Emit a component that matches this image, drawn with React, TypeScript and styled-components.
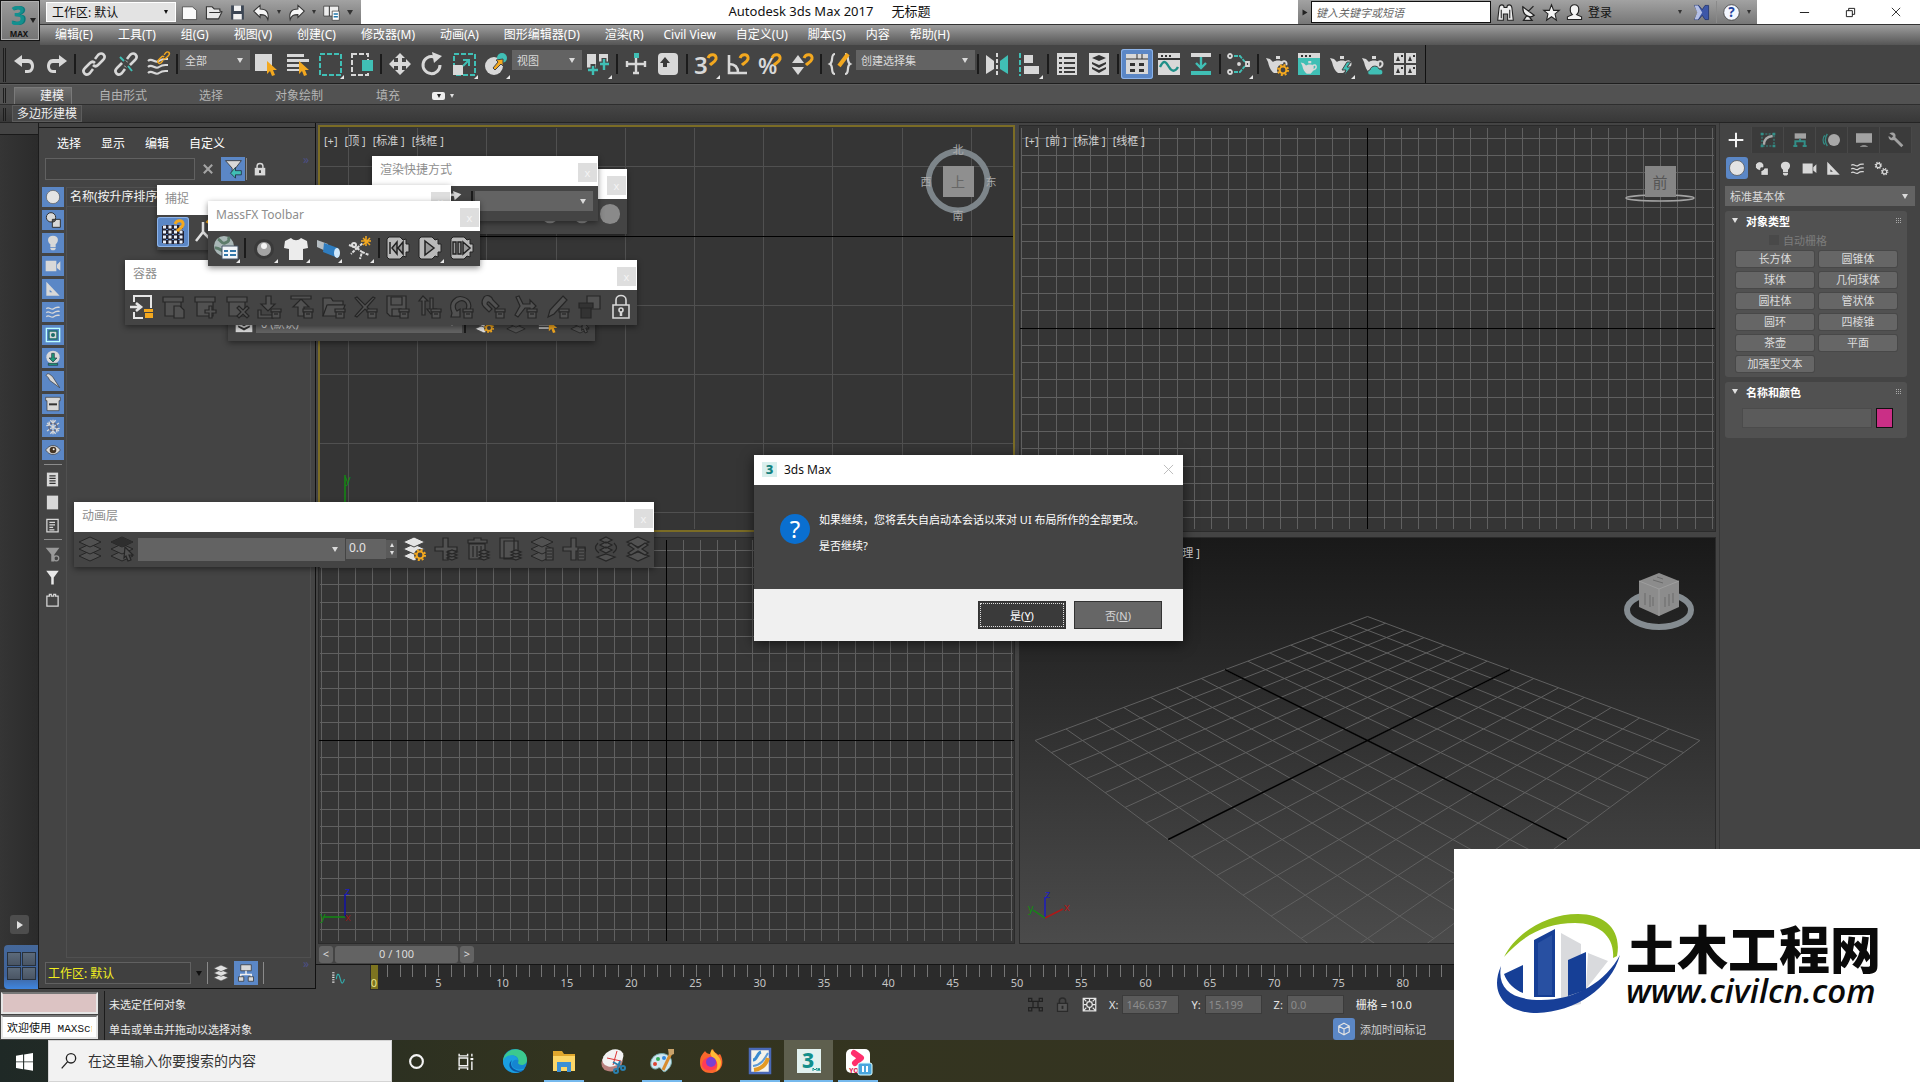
import React from "react";
import styled, { createGlobalStyle, css } from "styled-components";

const C = {
  panel: "#444444",
  view: "#353535",
  light: "#d8d8d8",
  teal: "#40bfb5",
  amber: "#f3a81f",
  blue: "#5b87c6",
  line: "#222222",
  dim: "#515151",
  dimLine: "#262626",
};

const Global = createGlobalStyle`
  *, *::before, *::after { box-sizing: border-box; }
  html, body { margin: 0; padding: 0; background: ${C.panel}; }
  body, button, input, select {
    font-family: "Noto Sans", "Noto Sans CJK SC", sans-serif;
    font-size: 12px;
    color: #e4e4e4;
  }
  button { margin: 0; padding: 0; border: 0; background: none; cursor: default; }
  svg { display: block; flex: none; overflow: visible; }
`;

/* ---------- icons ---------- */

const L = C.light;
const T = C.teal;
const A = C.amber;
const D = { fill: C.dim, stroke: C.dimLine, strokeWidth: 1.2 };

const miniBox = (
  <g>
    <path d="M14 14h10v3H14z" />
    <path d="M15 17h8v6h-8z" />
    <path d="M17 19h4" />
  </g>
);
const miniStack = (
  <g>
    <path d="M18 19l5-2 -5-2 -5 2z" transform="translate(0 4)" />
    <path d="M18 19l5-2 -5-2 -5 2z" transform="translate(0 1)" />
    <path d="M18 19l5-2 -5-2 -5 2z" transform="translate(0 -2)" />
  </g>
);
const miniList = (
  <g>
    <path d="M16 11h7v12h-7z" />
    <path d="M17 14h5M17 17h5M17 20h5" />
  </g>
);
const cursor = <path d="M13 9l10 9h-4l2 5-3 1-2-5-3 3z" fill={A} />;
const hook = <path d="M14 6c2-5 9-4 8 1-1 3-4 4-6 6" fill="none" stroke={A} strokeWidth="3" />;
const teapot = (
  <g>
    <path d="M1 6l4 1 3 3c2-2 8-2 10 0 1 5-1 9-4 11H9c-3-2-5-6-6-11z" fill={L} />
    <path d="M11 4h4v3h-4z" fill={L} />
    <path d="M17 10c5-3 7 4 0 6" fill="none" stroke={L} strokeWidth="2" />
  </g>
);
const layerStack = (fill: string, stroke: string) => (
  <g fill={fill} stroke={stroke}>
    <path d="M12 14l11 5-11 5-11-5z" />
    <path d="M12 7l11 5-11 5-11-5z" />
    <path d="M12 0l11 5-11 5-11-5z" />
  </g>
);
const gear = (x: number, y: number, color: string) => (
  <g transform={`translate(${x} ${y})`} fill="none" stroke={color}>
    <circle r="3.4" strokeWidth="2" />
    <circle r="5" strokeWidth="2" strokeDasharray="2 1.93" />
  </g>
);
const waves = (stroke: string) => (
  <g fill="none" stroke={stroke} strokeWidth="2">
    <path d="M2 7c4-4 7 3 11 0s6-2 9-2" />
    <path d="M2 13c4-4 7 3 11 0s6-2 9-2" />
    <path d="M2 19c4-4 7 3 11 0s6-2 9-2" />
  </g>
);
const chain = (a: string, b: string) => (
  <g fill="none" strokeWidth="2.6">
    <path d="M13 7l3-4c4-4 9 1 5 5l-5 5c-2 2-4 1-5 0" stroke={a} />
    <path d="M11 17l-3 4c-4 4-9-1-5-5l5-5c2-2 4-1 5 0" stroke={b} />
  </g>
);
const mfxGear = (inner: React.ReactNode) => (
  <g>
    <path d="M3 1h11l3 3 3-1v5h3v8h-3v5l-3-1-3 3H3l-2-2V3z" fill="#b9b9b9" stroke="#222" />
    {inner}
  </g>
);

const ICONS: Record<string, React.ReactNode> = {
  undo: <path d="M2 9l8-6v4h6c8 0 8 14 0 14h-3v-3h3c4 0 4-7 0-7h-6v4z" fill={L} />,
  redo: <path d="M23 9l-8-6v4H9C1 7 1 21 9 21h3v-3H9c-4 0-4-7 0-7h6v4z" fill={L} />,
  link: chain(L, L),
  unlink: (
    <g>
      {chain(L, L)}
      <path d="M5 5l14 14" stroke={C.panel} strokeWidth="4" />
      <path d="M6 5l4 4M14 14l4 5" stroke={T} strokeWidth="2" />
    </g>
  ),
  bind: (
    <g>
      <g transform="translate(0 2)">{waves(L)}</g>
      <g transform="translate(11 -1) scale(.55)">{chain(A, A)}</g>
    </g>
  ),
  select: (
    <g>
      <path d="M1 2h17v17H1z" fill={L} />
      {cursor}
    </g>
  ),
  byName: (
    <g>
      <path d="M1 2h17v3H1zM1 7h22v3H1zM1 12h12v3H1zM1 17h12v2H1z" fill={L} />
      {cursor}
    </g>
  ),
  region: <path d="M2 2h21v21H2z" fill="none" stroke={T} strokeWidth="2" strokeDasharray="5 2" />,
  crossing: (
    <g>
      <path d="M2 2h16v21H2z" fill="none" stroke={L} strokeWidth="2" strokeDasharray="5 2" />
      <path d="M12 8h11v11H12z" fill={T} />
    </g>
  ),
  move: <path d="M12 1l5 5h-3v4h4V7l5 5-5 5v-3h-4v4h3l-5 5-5-5h3v-4H6v3l-5-5 5-5v3h4V6H7z" fill={L} />,
  rotate: (
    <g>
      <path d="M14 5a8.500 8.500 0 1 0 6 8" fill="none" stroke={L} strokeWidth="3" />
      <path d="M12 0l10 4-8 7z" fill={L} />
    </g>
  ),
  scale: (
    <g>
      <path d="M2 2h21v21H2z" fill="none" stroke={T} strokeWidth="2" strokeDasharray="5 2" />
      <path d="M1 13h10v10H1z" fill={L} />
      <path d="M11 8h6v6M17 8l-6 6" fill="none" stroke={T} strokeWidth="2" />
    </g>
  ),
  place: (
    <g>
      <circle cx="10" cy="14" r="9" fill={L} />
      <circle cx="18" cy="6" r="5" fill={T} />
      <path d="M9 16l5-6-2-2 7-1v7l-2-2-6 6z" fill={A} stroke="#444" />
    </g>
  ),
  pivot: (
    <g>
      <path d="M1 2h9v16H1zM13 2h9v9h-9z" fill={L} />
      <path d="M7 12v12M1 18h12M18 6v12M12 12h12" stroke={C.panel} strokeWidth="5" />
      <path d="M7 14v9M2 18h10M18 7v11M14 12h9" stroke={T} strokeWidth="2.4" />
    </g>
  ),
  manip: (
    <g>
      <path d="M12 6v16M2 12h20M3 9v6M21 9v6M9 21h6" stroke={L} strokeWidth="2.4" />
      <path d="M10 1h5v5h-5z" fill={T} />
    </g>
  ),
  keyb: (
    <g>
      <rect x="2" y="1" width="20" height="22" rx="4" fill={L} />
      <path d="M9 5l5 6h-3v4H7v-4H4z" fill="#3a3a3a" />
    </g>
  ),
  snap3: (
    <g>
      <text x="0" y="22" fill={L} fontSize="24" fontWeight="600">3</text>
      {hook}
    </g>
  ),
  snapA: (
    <g>
      <path d="M3 3v18h18M3 12c6 0 9 3 9 9" fill="none" stroke={L} strokeWidth="2.6" />
      {hook}
    </g>
  ),
  snapP: (
    <g>
      <text x="0" y="22" fill={L} fontSize="22" fontWeight="600">%</text>
      {hook}
    </g>
  ),
  snapS: (
    <g>
      <path d="M8 3l6 8H2zM8 23l6-8H2z" fill={L} />
      {hook}
    </g>
  ),
  sets: (
    <g fill="none">
      <path d="M7 2c-5 0-1 8-5 10 4 2 0 10 5 10M17 2c5 0 1 8 5 10-4 2 0 10-5 10" stroke={L} strokeWidth="2.2" />
      <path d="M11 14l9-12" stroke={A} strokeWidth="4" />
    </g>
  ),
  mirror: (
    <g>
      <path d="M1 3l8 6v8l-8 5z" fill={L} />
      <path d="M23 3l-8 6v8l8 5z" fill={T} />
      <path d="M12 1v22" stroke={L} strokeWidth="2" strokeDasharray="4 2" />
    </g>
  ),
  align: (
    <g>
      <path d="M3 1v23" stroke={T} strokeWidth="2" strokeDasharray="5 2" />
      <path d="M7 3h9v8H7zM7 14h15v8H7z" fill={L} />
    </g>
  ),
  scene: (
    <g>
      <path d="M2 1h20v22H2z" fill={L} />
      <path d="M4 5h3v2H4zM9 5h11v2H9zM4 10h3v2H4zM9 10h11v2H9zM4 15h3v2H4zM9 15h11v2H9zM4 19h3v2H4zM9 19h11v2H9z" fill="#3a3a3a" />
    </g>
  ),
  layers: (
    <g>
      <path d="M2 1h20v22H2z" fill={L} />
      <path d="M12 3l7 3-7 3-7-3zM5 10l7 3 7-3v2l-7 4-7-4zM5 15l7 3 7-3v2l-7 4-7-4z" fill="#333" />
    </g>
  ),
  ribbon: (
    <g>
      <path d="M1 2h22v20H1z" fill={L} />
      <path d="M1 7h22M12 2v5M17 2v5" stroke="#333" />
      <path d="M5 11h5v3H5zM14 11h5v3h-5zM5 17h5v3H5zM14 17h5v3h-5z" fill="#333" />
    </g>
  ),
  curve: (
    <g>
      <path d="M1 1h22v22H1z" fill={L} />
      <path d="M1 7h22M4 4h2M8 4h2M12 4h2" stroke="#333" strokeWidth="2" />
      <path d="M3 15c4-8 6-5 9 0s6 5 9 0" fill="none" stroke="#1f8f88" strokeWidth="2.4" />
    </g>
  ),
  dope: (
    <g>
      <path d="M2 1h20v4H2z" fill={L} />
      <path d="M12 5v10M7 11l5 5 5-5" fill="none" stroke={T} strokeWidth="2.400" />
      <path d="M2 19h20v4H2z" fill={T} />
    </g>
  ),
  schema: (
    <g fill="none" stroke={L} strokeWidth="1.8">
      <circle cx="3" cy="4" r="2" />
      <circle cx="3" cy="20" r="2" />
      <circle cx="12" cy="12" r="1" />
      <path d="M7 4h6l5 6M7 20h6l5-6" stroke={T} strokeDasharray="4 1" />
      <path d="M19 10h3v4h-3z" />
    </g>
  ),
  rSetup: (
    <g>
      {teapot}
      <circle cx="18" cy="18" r="6" fill={C.panel} />
      {gear(18, 18, A)}
    </g>
  ),
  rFrame: (
    <g>
      <path d="M1 1h22v22H1z" fill={T} />
      <path d="M1 1h22v5H1z" fill={L} />
      <path d="M4 4h2M8 4h2M12 4h2" stroke="#333" strokeWidth="2" />
      <g transform="translate(3 6) scale(.75)">{teapot}</g>
    </g>
  ),
  rProd: (
    <g>
      {teapot}
      <path d="M18 10l-5 8h4l-2 6 7-9h-4l4-5z" fill={T} stroke="#444" />
    </g>
  ),
  rCloud: (
    <g>
      {teapot}
      <path d="M9 23c-3 0-3-5 0-5 1-5 8-5 9-1 5 0 5 6 1 6z" fill={T} stroke="#444" />
    </g>
  ),
  gallery: (
    <g>
      <path d="M1 1h10v10H1zM13 1h10v10H13zM1 13h10v10H1zM13 13h10v10H13z" fill={L} />
      <path d="M3 9l2-5 2 5zM15 9l2-5 2 5zM3 21l2-5 2 5zM15 21l2-5 2 5zM8 3h2v2H8zM20 3h2v2h-2zM8 15h2v2H8zM20 15h2v2h-2z" fill="#333" />
    </g>
  ),
  /* categories */
  sphere: <circle cx="12" cy="12" r="10" fill="#e4e4e4" stroke="#555" />,
  shapes: (
    <g stroke="#333" strokeWidth="1.500">
      <path d="M11 11h12v12H11z" fill={L} />
      <circle cx="9" cy="8" r="7" fill={L} />
      <path d="M11 11h5c0 3-2 4-5 4z" fill="#555" />
    </g>
  ),
  light: <path d="M12 1c9 0 9 9 4 13v4H8v-4C3 10 3 1 12 1zM8 19h8v2l-2 2h-4l-2-2z" fill={L} />,
  camera: <path d="M1 4h16v16H1zM18 10l5-5v14l-5-4z" fill={L} />,
  helper: <path d="M2 1l20 21H2zM7 13v4h4z" fill={L} fillRule="evenodd" />,
  warp: waves(L),
  systems: (
    <g>
      {gear(7, 7, L)}
      {gear(17, 17, L)}
    </g>
  ),
  group: (
    <g>
      <path d="M2 2h20v20H2z" fill="none" stroke="#bff" strokeWidth="2" />
      <path d="M6 6h12v12H6z" fill={L} stroke="#1b6d68" strokeWidth="2" />
      <circle cx="12" cy="12" r="3" fill="#1b6d68" />
    </g>
  ),
  xref: (
    <g>
      <circle cx="12" cy="11" r="10" fill={L} />
      <path d="M10 5h4v7h4l-6 6-6-6h4zM5 20h14v3H5z" fill="#1f9a78" stroke="#234" />
    </g>
  ),
  bone: <path d="M2 4c-1-3 5-4 6-1l3 2 11 17L7 11 5 7z" fill={L} stroke="#333" />,
  crate: (
    <g>
      <path d="M1 2h22v5h-2v15H3V7H1z" fill={L} stroke="#333" />
      <path d="M6 11h12v3H6z" fill="#333" />
    </g>
  ),
  snow: (
    <g stroke={L} strokeWidth="2" fill="none">
      <path d="M12 1v22M3 6l18 12M21 6L3 18" />
      <circle cx="12" cy="12" r="6" stroke="#667" />
      <path d="M8 2l4 4 4-4M8 22l4-4 4 4M2 10l5-1-1-5M22 14l-5 1 1 5" />
    </g>
  ),
  eye: (
    <g>
      <path d="M1 12c6-9 16-9 22 0-6 9-16 9-22 0z" fill={L} stroke="#333" />
      <circle cx="12" cy="12" r="5" fill="#432" />
      <circle cx="13" cy="11" r="1.500" fill="#eee" />
    </g>
  ),
  page: (
    <g>
      <path d="M3 1h18v22H3z" fill={L} />
      <path d="M7 6h10M7 10h10M7 14h10M7 18h10" stroke="#333" strokeWidth="2" />
    </g>
  ),
  blank: <path d="M3 1h18v22H3z" fill={L} />,
  pageO: (
    <g fill="none" stroke={L} strokeWidth="2">
      <path d="M3 2h18v20H3z" />
      <path d="M7 7h9M7 11h9M7 15h6M7 19h8" />
    </g>
  ),
  funnelX: (
    <g>
      <path d="M1 1h22l-8 11v11h-5V12z" fill="#999" />
      <circle cx="18" cy="18" r="4" fill="none" stroke="#999" strokeWidth="2" />
    </g>
  ),
  funnel: <path d="M2 1h20l-8 11v11h-4V12z" fill="#e8e8e8" />,
  cage: <path d="M3 5h4V2h3v3h4V2h3v3h4v16H3z" fill="none" stroke={L} strokeWidth="2" />,
  filterB: (
    <g>
      <path d="M3 2h19l-7 9v10l-4-3v-7z" fill={L} stroke="#333" />
      <path d="M22 14h-7v-4l-6 7 6 6v-4h7z" fill={T} stroke="#234" />
    </g>
  ),
  lock: (
    <g>
      <path d="M7 11V7c0-6 10-6 10 0v4" fill="none" stroke={L} strokeWidth="2.500" />
      <path d="M3 10h18v13H3z" fill={L} />
      <path d="M12 14v5" stroke="#333" strokeWidth="3" />
    </g>
  ),
  lockO: (
    <g fill="none" stroke={L} strokeWidth="1.600">
      <path d="M7 10V5c0-6 10-6 10 0v5M4 10h16v13H4z" />
      <circle cx="12" cy="15" r="2" />
      <path d="M12 17v4" strokeWidth="2.500" />
    </g>
  ),
  hier: (
    <g>
      <path d="M5 1h14v8H5z" fill={L} stroke="#333" />
      <path d="M12 9v5M5 17v-3h14v3" fill="none" stroke="#eee" strokeWidth="2" />
      <path d="M2 17h7v6H2zM15 17h7v6h-7z" fill={L} stroke="#333" />
    </g>
  ),
  stackS: layerStack("#e0e0e0", "#444"),
  /* command tabs */
  plus: <path d="M12 1v22M1 12h22" stroke="#f2f2f2" strokeWidth="3" />,
  modify: (
    <g>
      <path d="M3 3h18v18H3z" fill="none" stroke="#338e87" strokeWidth="1.600" strokeDasharray="3 2" />
      <path d="M6 19c0-8 4-12 13-13" fill="none" stroke="#aaa" strokeWidth="3.500" />
      <path d="M1 1h4v4H1zM19 1h4v4h-4zM1 19h4v4H1zM19 19h4v4h-4z" fill="#338e87" />
    </g>
  ),
  hierT: (
    <g>
      <path d="M4 2h17v8H4z" fill="#a2a2a2" />
      <path d="M12 10v4M5 20v-6h14v6M2 21h6M16 21h6" stroke="#338e87" strokeWidth="3" fill="none" />
    </g>
  ),
  motion: (
    <g>
      <circle cx="15" cy="12" r="9" fill="#a8a8a8" />
      <path d="M5 3c-4 5-4 13 0 18M1 5c-3 4-3 10 0 14" fill="none" stroke="#338e87" strokeWidth="2" />
    </g>
  ),
  display: <path d="M0 2h24v14H0zM6 22c2-3 10-3 12 0z" fill="#a2a2a2" />,
  wrench: <path d="M2 2c5-3 11 0 9 6l12 12-3 3L9 12C4 14 0 10 1 6l4 3 3-3z" fill="#a2a2a2" />,
  /* container toolbar */
  cOpen: (
    <g>
      <path d="M5 7V1h17v12M5 17v6h9" fill="none" stroke="#e6e6e6" strokeWidth="2" />
      <path d="M1 12h11M7 8l5 4-5 4" fill="none" stroke="#e6e6e6" strokeWidth="2.600" />
      <path d="M15 14h9v3h-9zM16 18h8v5h-8z" fill={A} />
    </g>
  ),
  c1: <g {...D}><path d="M2 2h20v5H2zM4 7h16v14H4z" /><path d="M13 11h6l4 4v8H13z" /></g>,
  c2: <g {...D}><path d="M2 2h20v5H2zM4 7h16v14H4z" /><path d="M16 11h3v4h4v3h-4v5h-3v-5h-4v-3h4z" /></g>,
  c3: <g {...D}><path d="M2 2h20v5H2zM4 7h16v14H4z" /><path d="M12 13l2-2 4 4 4-4 2 2-4 4 4 4-2 2-4-4-4 4-2-2 4-4z" /></g>,
  c4: <g {...D}><path d="M9 1h5v8h4l-7 7-7-7h5zM1 15h3v5h12v3H1z" />{miniBox}</g>,
  c5: <g {...D}><path d="M2 1h20v3H2zM12 4l8 8h-5v9H9v-9H4z" />{miniBox}</g>,
  c6: <g {...D}><path d="M2 3h8l2 3h10v4H7L2 21z" /><path d="M6 10h18l-4 11H2z" />{miniBox}</g>,
  c7: <g {...D}><path d="M2 3l2-1 8 8 8-8 2 1-8 9 8 9-2 1-8-8-8 8-2-1 8-9z" />{miniBox}</g>,
  c8: <g {...D}><path d="M2 1h19v20H5l-3-3z" /><path d="M6 2h11v8H6zM7 14h9v7H7z" />{miniBox}</g>,
  c9: <g {...D}><path d="M6 1l5 5H8v14H5V6H2zM13 3h3v11h3l-5 5-4-5h3z" />{miniBox}</g>,
  c10: <g {...D}><path d="M3 18c-5-12 5-18 11-16 8 2 9 9 7 13h-4c3-9-4-11-8-8-4 2-3 7-1 9l3-2v8H2z" />{miniBox}</g>,
  c11: <g {...D}><path d="M3 2c3-3 8-1 9 3l6 6-3 3-6-6c-2-2-3-1-3 1l5 5-3 3-5-5c-3-3-2-7 0-10z" />{miniBox}</g>,
  c12: <g {...D}><path d="M3 2l3-1 4 8h7V5l6 6-6 6v-4h-5L5 22l-3-2 5-9z" />{miniBox}</g>,
  c13: <g {...D}><path d="M18 1l4 4L9 19l-6 3 2-7z" />{miniBox}</g>,
  c14: <g {...D}><path d="M10 1h13v13H10z" /><path d="M2 8h14v5H2zM4 13h10v10H4z" fill="#333" /></g>,
  /* animation layer toolbar */
  a1: layerStack(C.dim, C.dimLine),
  a2: <g>{layerStack(C.dim, C.dimLine)}<path d="M12 0l11 5-11 5-11-5z" fill="#2e2e2e" /><path d="M15 10l8 8h-4l2 5-3 1-2-5-2 2z" {...D} /></g>,
  aGear: <g>{layerStack("#e4e4e4", "#444")}<circle cx="18" cy="18" r="6" fill={C.panel} />{gear(18, 18, A)}</g>,
  a3: <g {...D}><path d="M9 1h5v9h9v4h-9v9H9v-9H1v-4h8z" />{miniStack}</g>,
  a4: <g {...D}><path d="M2 3h6V1h7v2h6v3H2zM3 7h16v15H3z" /><path d="M7 9v11M11 9v11M15 9v11" />{miniStack}</g>,
  a5: <g {...D}><path d="M2 1h14v20H2zM6 4h14v18H6z" />{miniStack}</g>,
  a6: <g>{layerStack(C.dim, C.dimLine)}<g {...D}>{miniList}</g></g>,
  a7: <g {...D}><path d="M9 1h5v9h9v4h-9v9H9v-9H1v-4h8z" />{miniList}</g>,
  a8: <g {...D}><path d="M12 0l6 3-6 3-6-3zM12 5l6 3-6 3-6-3zM12 10l6 3-6 3-6-3z" /><path d="M12 17l9 3-9 4-9-4z" /><path d="M4 6c-4 4-3 7 1 10M20 6c4 4 3 7-1 10" fill="none" /></g>,
  a9: <g {...D}><path d="M12 0l11 5-11 5-11-5zM12 15l11 4-11 5-11-5z" /><path d="M2 8l3-2 7 5 7-5 3 2-6 4 6 4-3 2-7-4-7 4-3-2 6-4z" /></g>,
  /* MassFX */
  world: (
    <g>
      <circle cx="10" cy="10" r="10" fill="#a9b7b7" />
      <path d="M4 3c4 2 3 5 7 4s5-4 3-6M1 12c4-1 5 3 9 3" stroke="#5d7c6b" strokeWidth="3" fill="none" />
      <path d="M8 10h16v13H8z" fill="#f2f6fa" stroke="#456" />
      <path d="M10 15h4M10 19h4M16 15h6M16 19h6" stroke="#37a" strokeWidth="2" />
    </g>
  ),
  ball: (
    <g>
      <circle cx="12" cy="13" r="10" fill="#3a3a3a" />
      <circle cx="12" cy="13" r="7" fill="#a4a4a4" />
      <circle cx="12" cy="10" r="3" fill="#f4f4f4" />
    </g>
  ),
  shirt: <path d="M7 2c3 3 7 3 10 0l6 3 1 7-5 1v11H5V13l-5-1 1-7z" fill="#ececec" />,
  fluid: (
    <g>
      <path d="M1 4l11 4v8L1 11z" fill="#b5bdc2" />
      <path d="M8 7l14 5v10L7 16z" fill="#2f7dc0" />
      <ellipse cx="21" cy="17" rx="3" ry="5" fill="#cfe8fb" />
    </g>
  ),
  ragdoll: (
    <g fill="none" stroke="#ddd" strokeWidth="2">
      <path d="M1 9l8 3-6 6M9 12l5 4-2 7M9 12l6-5M14 16l7 3" strokeDasharray="3 1" />
      <circle cx="6" cy="9" r="2" />
      <path d="M18 0v10M13 5h10M15 2l7 7M22 2l-7 7" stroke={A} strokeWidth="1.500" />
    </g>
  ),
  mfxBack: mfxGear(<path d="M4 6v12M11 6l-5 6 5 6zM17 6l-5 6 5 6z" stroke="#222" fill="#999" strokeWidth="1.500" />),
  mfxPlay: mfxGear(<path d="M7 5l9 7-9 7z" stroke="#222" fill="#999" strokeWidth="1.500" />),
  mfxStep: mfxGear(<path d="M3 6h3v12H3zM8 6h3v12H8zM13 6l7 6-7 6z" stroke="#222" fill="#999" strokeWidth="1.500" />),
  snapGrid: (
    <g>
      <path d="M2 7h20M2 12h20M2 17h20M2 22h20M3 6v17M9 6v17M15 6v17M21 11v12" stroke="#223" strokeWidth="4" />
      <path d="M2 7h20M2 12h20M2 17h20M2 22h20" stroke="#e8eef8" strokeWidth="3" strokeDasharray="3 2.500" />
      <path d="M14 4c2-5 9-4 8 1-1 3-4 4-6 6" fill="none" stroke={A} strokeWidth="3" />
    </g>
  ),
  snapAxis: (
    <g>
      <path d="M10 2v10l-7 9M10 12l8 8" stroke="#e0e0e0" strokeWidth="2.500" fill="none" />
      <path d="M14 3c2-4 8-3 7 1" stroke={A} strokeWidth="3" fill="none" />
    </g>
  ),
  teaSphere: <circle cx="12" cy="12" r="11" fill="#8a8a8a" />,
  /* title bar */
  fNew: <path d="M2 4h14l6 5v13H2z" fill="#fafafa" stroke="#333" />,
  fOpen: <path d="M2 4h8l3 3h8v3l3 1-5 10H2zM6 12h16" fill="#e8e8e8" stroke="#333" strokeWidth="1.500" />,
  fSave: (
    <g>
      <path d="M3 2h18v20H3z" fill="#3c4654" />
      <path d="M7 2h10v8H7zM6 14h12v8H6z" fill="#f2f2f2" />
    </g>
  ),
  qUndo: <path d="M1 10l9-8v5c9 0 13 5 11 15-2-6-5-7-11-7v4z" fill="#f6f6f6" stroke="#333" strokeWidth="1.500" />,
  qRedo: <path d="M23 10l-9-8v5C5 7 1 12 3 22c2-6 5-7 11-7v4z" fill="#f6f6f6" stroke="#333" strokeWidth="1.500" />,
  project: (
    <g stroke="#333">
      <path d="M1 3h8v14H1zM9 3h13v14H9z" fill="#eee" />
      <path d="M13 10h10v13H13z" fill="#fff" />
      <path d="M15 14h6M15 18h6" stroke="#27a" strokeWidth="2" />
    </g>
  ),
  binoc: <path d="M3 5c1-5 7-5 7 0h4c0-5 6-5 7 0l2 18h-8v-9H9v9H1zM6 8v12M18 8v12" fill="#eee" stroke="#222" strokeWidth="1.500" />,
  dish: <path d="M4 4l16 12c-6 5-17 0-16-12zM12 10l7-7M9 17l-4 6h12l-4-5" fill="#eee" stroke="#222" strokeWidth="1.800" />,
  star: <path d="M12 1l3 8h8l-6 5 2 9-7-5-7 5 2-9-6-5h8z" fill="#f4f4f4" stroke="#222" strokeWidth="1.500" />,
  user: <path d="M12 1c8 0 7 11 3 14l7 3v4H2v-4l7-3C5 12 4 1 12 1z" fill="#f4f4f4" stroke="#222" strokeWidth="1.500" />,
  exch: (
    <g>
      <path d="M2 2h6l5 6 4-6h5v20h-5l-4-6-5 6H2l5-10z" fill="#3d57a8" stroke="#1a2c66" />
      <path d="M2 2h5l6 10-6 10H2l4-10z" fill="#b5c0e6" />
    </g>
  ),
  help: (
    <g>
      <circle cx="12" cy="12" r="11" fill="#f4f7ff" stroke="#333" />
      <text x="12" y="19" fontSize="19" fontWeight="700" textAnchor="middle" fill="#2546a0">?</text>
    </g>
  ),
  min: <path d="M2 12h20" stroke="#111" strokeWidth="2" />,
  max: <path d="M3 8h13v13H3zM8 8V3h13v13h-5" fill="none" stroke="#111" strokeWidth="2" />,
  close: <path d="M2 2l20 20M22 2L2 22" stroke="currentColor" strokeWidth="2" />,
  clear: <path d="M2 2l20 20M22 2L2 22" stroke="currentColor" strokeWidth="5" />,
  mini: (
    <g>
      <path d="M2 15h4M2 19h4M2 11h4M2 7h4M2 3h4" stroke="#ddd" strokeWidth="2" />
      <path d="M9 14c2-14 5-8 7 0s4 10 7 0" fill="none" stroke="#3aa" strokeWidth="2" />
    </g>
  ),
  /* status bar */
  isolate: <g stroke="#222" fill="none" strokeWidth="2"><path d="M1 7V2h5v5zM18 7V2h5v5zM1 22v-5h5v5zM18 22v-5h5v5zM8 7h8v10H8z" /></g>,
  lockD: <g><path d="M7 11V6c0-6 10-6 10 0v5" fill="none" stroke="#2a2a2a" strokeWidth="2.500" /><path d="M4 10h16v13H4z" fill="#555" stroke="#2a2a2a" strokeWidth="2" /><path d="M12 14v5" stroke="#2a2a2a" strokeWidth="3" /></g>,
  absolute: (
    <g fill="none" stroke="#e4e4e4" strokeWidth="2">
      <path d="M2 2h20v20H2zM2 2l5 5M22 2l-5 5M2 22l5-5M22 22l-5-5" />
      <circle cx="12" cy="12" r="4.500" />
      <path d="M12 3v5M12 16v5M3 12h5M16 12h5" />
    </g>
  ),
  cube: <g fill="none" stroke="#e4e4e4" strokeWidth="2"><path d="M12 2l9 5v10l-9 5-9-5V7zM3 7l9 5 9-5M12 12v10" /></g>,
  /* taskbar */
  win: <path d="M0 4l10-2v10H0zM11.500 2L24 0v12H11.500zM0 13h10v10L0 21zM11.500 13H24v12l-12.500-2z" fill="#fff" />,
  search: <g fill="none" stroke="#222" strokeWidth="2"><circle cx="15" cy="8" r="7" /><path d="M10 13L1 23" /></g>,
  cortana: <circle cx="12" cy="12" r="9" fill="none" stroke="#f4f4f4" strokeWidth="3" />,
  taskview: <g fill="none" stroke="#f4f4f4" strokeWidth="2"><path d="M3 7h12v11H3zM3 1v3h12V1M3 24v-3h12v3M21 1v4M21 12v12" /><path d="M19 7h4v3h-4z" fill="#fff" stroke="none" /></g>,
  edge: (
    <g>
      <circle cx="12" cy="12" r="12" fill="#1585d1" />
      <path d="M0 13C0-3 24-4 24 11c0 6-8 6-9 3 2-5-3-9-8-7-4 1-6 3-7 6z" fill="#3bc98f" />
      <path d="M0 12c3-8 14-7 15-1-2-1-6 0-6 4 0 5 7 7 13 4-6 9-22 5-22-7z" fill="#1a9fe0" />
      <path d="M9 11c-4 7 5 13 12 10-8 6-20-3-12-10z" fill="#0c53a1" />
    </g>
  ),
  folder: (
    <g>
      <path d="M1 2h9l2 3h11v17H1z" fill="#e0a72e" />
      <path d="M1 7h22v15H1z" fill="#fcd668" />
      <path d="M5 13h14v10h-4v-5H9v5H5z" fill="#3a8fd6" />
    </g>
  ),
  snip: (
    <g>
      <ellipse cx="11" cy="13" rx="11" ry="9" fill="#b9817e" transform="rotate(-25 11 13)" />
      <ellipse cx="12" cy="9" rx="11" ry="8" fill="#f3f3f3" transform="rotate(-25 12 9)" />
      <path d="M6 9l14 3M16 2l-4 14" stroke="#d33" />
      <g fill="none" stroke="#2a7fae" strokeWidth="2"><path d="M12 13l9 5M19 12l-3 9" /><circle cx="15" cy="22" r="2" /><circle cx="22" cy="19" r="2" /></g>
    </g>
  ),
  paint: (
    <g>
      <path d="M1 17C-1 8 8 3 15 5c9 3 8 12 1 17-4 3-4-5-8-3-2 2-6 1-7-2z" fill="#cfe6f2" stroke="#7aa" />
      <circle cx="5" cy="15" r="2" fill="#d43" /><circle cx="8" cy="10" r="2" fill="#3a5" /><circle cx="14" cy="9" r="2" fill="#38d" />
      <path d="M13 21L21 4" stroke="#d88c2e" strokeWidth="3" /><path d="M18 0h6v5l-5 2z" fill="#c9a26a" />
    </g>
  ),
  firefox: (
    <g>
      <path d="M1 13C1 6 5 4 6 2c1 2 3 3 5 3 1-3 2-4 3-5 1 4 4 4 5 6l2-1c6 10 0 19-9 19S1 19 1 13z" fill="#f9672c" />
      <path d="M3 16c0-7 7-8 7-8 9-3 11 8 6 12-6 3-12 1-13-4z" fill="#ff3b57" />
      <path d="M13 0c2 4 9 8 9 13 0 5-2 8-5 9 3-6 1-12-4-14-2-2-2-5 0-8z" fill="#fdbb36" />
      <circle cx="12" cy="13" r="5" fill="#7b3fd2" />
    </g>
  ),
  notes: (
    <g>
      <path d="M2 0h20v24H2z" fill="#f5f3ea" stroke="#4a69b8" strokeWidth="2.500" />
      <path d="M5 11C9 11 9 4 13 3" fill="none" stroke="#3a8bd0" strokeWidth="3" />
      <path d="M5 17c8-1 11-6 15-13" fill="none" stroke="#5d9ad6" strokeWidth="2" />
      <path d="M6 21c8-1 12-5 14-12" fill="none" stroke="#e39a25" strokeWidth="4" />
    </g>
  ),
  max3: (
    <g>
      <path d="M0 0h24v24H0z" fill="#e2f1ef" />
      <text x="11" y="19" fontSize="21" fontWeight="800" textAnchor="middle" fill="#148f8b">3</text>
      <path d="M16 22v-3l2 2 2-2v3M21 22l1-3 1 3" fill="none" stroke="#148f8b" />
    </g>
  ),
  three: (
    <g>
      <path d="M0 0h24v24H0z" fill="#d9efed" />
      <text x="12" y="19" fontSize="21" fontWeight="800" textAnchor="middle" fill="#14827f">3</text>
    </g>
  ),
  youku: (
    <g>
      <rect width="24" height="24" rx="5" fill="#fff" />
      <path d="M8 4l7 5-6 5" fill="none" stroke="#ff2f6d" strokeWidth="6" strokeLinecap="round" strokeLinejoin="round" />
      <text x="3" y="24" fontSize="7" fontWeight="800" fill="#e22a5c">YO</text>
      <rect x="12" y="14" width="14" height="12" rx="2" fill="#4aa6dd" stroke="#dff" />
      <path d="M17 17v6M21 17v6" stroke="#fff" strokeWidth="2" />
    </g>
  ),
};

const Icon = ({ name, size = 24 }: { name: string; size?: number }) => (
  <svg width={size} height={size} viewBox="0 0 24 24" aria-hidden="true">
    {ICONS[name]}
  </svg>
);

const Caret = styled.i<{ $c?: string; $s?: number }>`
  flex: none;
  width: 0;
  height: 0;
  border: ${(p) => p.$s ?? 3}px solid transparent;
  border-top: ${(p) => (p.$s ?? 3) + 2}px solid ${(p) => p.$c ?? "#e0e0e0"};
  border-bottom: 0;
`;

/* ---------- shared controls ---------- */

const ComboBox = styled.span<{ $w: number; $h: number; $bg: string }>`
  position: relative;
  display: flex;
  align-items: center;
  flex: none;
  width: ${(p) => p.$w}px;
  height: ${(p) => p.$h}px;
  background: ${(p) => p.$bg};
  & > i { position: absolute; right: 7px; pointer-events: none; }
`;
const ComboSelect = styled.select<{ $color: string; $size: number }>`
  appearance: none;
  width: 100%;
  height: 100%;
  margin: 0;
  padding: 0 18px 0 5px;
  border: 0;
  border-radius: 0;
  background: none;
  font-size: ${(p) => p.$size}px;
  color: ${(p) => p.$color};
`;
type ComboProps = { label: string; value: string; w: number; h: number; bg?: string; color?: string; size?: number; arrow?: number };
const Combo = ({ label, value, w, h, bg = "#636363", color = "#dadada", size = 11, arrow = 3 }: ComboProps) => (
  <ComboBox $w={w} $h={h} $bg={bg}>
    <ComboSelect aria-label={label} $color={color} $size={size} defaultValue={value}>
      <option>{value}</option>
    </ComboSelect>
    <Caret $c={color} $s={arrow} />
  </ComboBox>
);

const ToolButton = styled.button<{ $w?: number; $on?: boolean; $fly?: boolean }>`
  position: relative;
  flex: none;
  display: flex;
  align-items: center;
  justify-content: center;
  width: ${(p) => p.$w ?? 32}px;
  height: 30px;
  border-radius: 3px;
  ${(p) => p.$on && css`background: ${C.blue}; box-shadow: inset 0 0 0 1px #8db3e8;`}
  ${(p) =>
    p.$fly &&
    css`
      &::after {
        content: "";
        position: absolute;
        right: 2px;
        bottom: 0;
        border: 2px solid #e8e8e8;
        border-top-color: transparent;
        border-left-color: transparent;
      }
    `}
`;
const ToolSep = styled.span<{ $w?: number }>`
  flex: none;
  width: ${(p) => p.$w ?? 6}px;
  height: 20px;
  background: linear-gradient(90deg, transparent 2px, #1b1b1b 2px 4px, transparent 4px);
`;
const Grip = styled.span`
  flex: none;
  align-self: stretch;
  width: 8px;
  margin: 3px 0 1px;
  background: linear-gradient(90deg, transparent 3px, #1d1d1d 3px 4px, transparent 4px 5px, #1d1d1d 5px 6px, transparent 6px);
`;

/* ---------- page ---------- */

const Page = styled.div`
  position: relative;
  display: flex;
  flex-direction: column;
  min-height: 100vh;
  overflow: hidden;
  background: ${C.panel};
`;

const Top = styled.header`
  display: grid;
  grid-template-columns: 40px 1fr;
  height: 45px;
`;
const AppButton = styled.button`
  position: relative;
  z-index: 1;
  height: 41px;
  display: flex;
  flex-direction: column;
  align-items: center;
  background: linear-gradient(#9a9a9a, #747474);
  border: 1px solid #151515;
  box-shadow: inset 0 0 0 1px #b0b0b0;
  & > b { font-size: 26px; line-height: 28px; color: #12908f; padding-right: 4px; text-shadow: 1px 0 #0b6f73; }
  & > strong { font-size: 8px; line-height: 10px; color: #111; padding-right: 2px; }
  & > i { position: absolute; right: 3px; top: 17px; }
`;
const TopRows = styled.div`
  display: flex;
  flex-direction: column;
`;
const TitleBar = styled.div`
  display: flex;
  height: 24px;
  background: #fff;
`;
const QuickBar = styled.div`
  display: flex;
  align-items: center;
  gap: 7px;
  width: 321px;
  padding: 0 4px 0 6px;
  background: linear-gradient(#a2a2a2, #777);
  & > span:first-child { border: 1px solid #fff; margin-right: -2px; }
`;
const QuickButton = styled.button`
  display: flex;
  align-items: center;
  gap: 7px;
`;
const TitleText = styled.div`
  flex: 1;
  display: flex;
  align-items: center;
  justify-content: center;
  gap: 18px;
  color: #111;
  font-size: 13px;
  line-height: 20px;
  padding-bottom: 2px;
`;
const InfoCenter = styled.div`
  display: flex;
  align-items: center;
  gap: 6px;
  width: 459px;
  padding-right: 6px;
  background: linear-gradient(#a2a2a2, #777);
`;
const Opener = styled.button`
  display: flex;
  align-items: center;
  justify-content: center;
  width: 13px;
  margin-right: -6px;
  & > i { transform: rotate(-90deg); }
`;
const InfoSearch = styled.input`
  width: 180px;
  height: 22px;
  margin: 0;
  padding: 0 4px;
  border: 1px solid #111;
  border-radius: 0;
  background: #fff;
  font-size: 11px;
  color: #222;
  &::placeholder { font-style: italic; color: #666; opacity: 1; }
`;
const SignIn = styled.button`
  display: flex;
  align-items: center;
  gap: 5px;
  flex: 1;
  color: #111;
  font-size: 12px;
  & > i { margin-left: auto; margin-right: 5px; }
`;
const WinControls = styled.div`
  display: grid;
  grid-template-columns: repeat(3, 46px);
  width: 163px;
  padding-left: 24px;
  color: #111;
`;
const WinButton = styled.button`
  display: flex;
  align-items: center;
  justify-content: center;
  color: #111;
`;
const MenuBar = styled.nav`
  display: flex;
  align-items: center;
  gap: 20px;
  height: 21px;
  padding-left: 15px;
  background: linear-gradient(#9d9d9d, #555);
  border-top: 1px solid #333;
`;
const MenuGroup = styled.div<{ $gap: number }>`
  display: flex;
  gap: ${(p) => p.$gap}px;
`;
const MenuItem = styled.button`
  color: #fff;
  font-size: 12px;
  line-height: 18px;
  white-space: nowrap;
`;

const Toolbar = styled.div`
  display: flex;
  align-items: center;
  height: 39px;
  border-bottom: 1px solid #1e1e1e;
  & > ${ComboBox} { align-self: flex-start; margin-top: 5px; }
`;
const ToolbarEnd = styled.span`
  align-self: stretch;
  width: 5px;
  border-right: 1px solid #111;
`;

const RibbonTabs = styled.div`
  display: flex;
  align-items: flex-end;
  height: 21px;
  background: #525252;
  border-top: 1px solid #5e5e5e;
  border-bottom: 1px solid #2e2e2e;
`;
const RibbonTab = styled.button<{ $on?: boolean; $w: number }>`
  width: ${(p) => p.$w}px;
  height: 17px;
  line-height: 16px;
  color: ${(p) => (p.$on ? "#f0f0f0" : "#b4b4b4")};
  ${(p) => p.$on && css`
    margin-left: 6px;
    background: linear-gradient(#707070, #505050);
    border: 1px solid #7a7a7a;
    border-bottom: 0;
    text-align: right;
    padding-right: 7px;
  `}
`;
const RibbonPill = styled.button`
  display: flex;
  align-items: center;
  gap: 5px;
  height: 17px;
  margin-left: 6px;
  & > span { display: flex; align-items: center; justify-content: center; width: 13px; height: 8px; border-radius: 2px; background: #eee; }
`;
const RibbonBody = styled.div`
  display: flex;
  height: 18px;
  background: linear-gradient(#464646, #383838);
  border-bottom: 1px solid #242424;
`;
const RibbonPanel = styled.button`
  margin-left: 4px;
  padding: 0 4px;
  background: #4a4a4a;
  border: 1px solid #5c5c5c;
  line-height: 15px;
  color: #eee;
`;

const Main = styled.main`
  flex: 1;
  display: grid;
  grid-template-columns: 39px 277px 1fr 201px;
  min-height: 0;
`;

const Dock = styled.aside`
  display: flex;
  flex-direction: column;
  justify-content: flex-end;
  align-items: flex-end;
  gap: 11px;
  border-right: 1px solid #1c1c1c;
  background: linear-gradient(90deg, #353535, #2b2b2b);
`;
const DockHead = styled.div`
  align-self: stretch;
  height: 12px;
  margin-bottom: auto;
  background: ${C.panel};
  border-bottom: 1px solid #1a1a1a;
`;
const DockArrow = styled.button`
  width: 19px;
  height: 19px;
  margin-right: 9px;
  display: flex;
  align-items: center;
  justify-content: center;
  border-radius: 3px;
  background: #4d4d4d;
  & > i { transform: rotate(-90deg); }
`;
const DockLayout = styled.button`
  width: 34px;
  height: 44px;
  padding: 7px 2px 9px 3px;
  border-radius: 4px 0 0 4px;
  background: linear-gradient(#45689a, #3f6299 70%, #3f86e0);
  display: grid;
  grid-template-columns: 1fr 1fr;
  gap: 1px;
  & > span { background: linear-gradient(#5c6a7a, #4a5564); border: 1px solid #28313c; }
`;

const Explorer = styled.section`
  display: grid;
  grid-template-rows: 60px 1fr 30px;
  padding-top: 4px;
  border-right: 1px solid #111;
  border-bottom: 1px solid #111;
`;
const ExplorerHead = styled.div`
  display: flex;
  flex-direction: column;
  padding: 6px 6px 0;
  border-top: 1px solid #1a1a1a;
`;
const ExplorerMenu = styled.nav`
  display: flex;
  gap: 20px;
  padding-left: 12px;
  height: 20px;
`;
const ExplorerRow = styled.div`
  display: flex;
  align-items: center;
  height: 30px;
  gap: 1px;
`;
const LineInput = styled.input<{ $w: number }>`
  width: ${(p) => p.$w}px;
  height: 22px;
  padding: 0 2px;
  border: 1px solid #616161;
  border-radius: 0;
  background: #404040;
  color: #f2ee1f;
`;
const SquareButton = styled.button<{ $on?: boolean }>`
  display: flex;
  align-items: center;
  justify-content: center;
  flex: none;
  width: 24px;
  height: 24px;
  color: #a4a4a4;
  background: ${(p) => (p.$on ? C.blue : "none")};
`;
const More = styled.span`
  margin-left: auto;
  align-self: flex-start;
  color: #4c4f86;
  font-size: 12px;
  line-height: 12px;
`;
const Rule = styled.span`
  width: 1px;
  height: 22px;
  background: #8a8a8a;
`;
const ExplorerBody = styled.div`
  display: grid;
  grid-template-columns: 27px 1fr;
`;
const FilterStrip = styled.div`
  display: flex;
  flex-direction: column;
  align-items: center;
  gap: 3px;
  & > hr { width: 18px; margin: 1px 0; border: 0; border-top: 1px solid #8b8b8b; }
`;
const FilterButton = styled.button<{ $on?: boolean }>`
  display: flex;
  align-items: center;
  justify-content: center;
  width: 22px;
  height: 20px;
  background: ${(p) => (p.$on ? C.blue : "none")};
`;
const ObjectList = styled.div`
  margin-right: 4px;
  border: 1px solid #505050;
  & > div { height: 19px; line-height: 18px; padding-left: 3px; color: #f4f4f4; border-bottom: 1px solid #505050; }
`;
const ExplorerFoot = styled.div`
  display: flex;
  align-items: center;
  gap: 5px;
  padding: 0 6px;
`;

const Stage = styled.section`
  display: flex;
  flex-direction: column;
  min-width: 0;
`;
const Views = styled.div`
  flex: 1;
  display: grid;
  grid-template-columns: 1fr 1fr;
  grid-template-rows: 1fr 1fr;
  gap: 5px 4px;
  padding: 2px 3px 0 2px;
  min-height: 0;
`;
const Viewport = styled.div<{ $active?: boolean; $shade?: boolean }>`
  position: relative;
  overflow: hidden;
  background: ${(p) => (p.$shade ? "linear-gradient(#191919, #4b4b4b)" : C.view)};
  &::after {
    content: "";
    position: absolute;
    inset: 0;
    border: ${(p) => (p.$active ? "2px solid #7b6c25" : "1px solid #2b2b2b")};
  }
  & > svg { position: absolute; inset: 0; width: 100%; height: 100%; }
`;
const ViewLabel = styled.div`
  position: absolute;
  left: 6px;
  top: 7px;
  display: flex;
  gap: 7px;
  font-size: 11px;
  line-height: 18px;
  color: #cfcfcf;
`;

const SliderRow = styled.div`
  display: flex;
  align-items: center;
  gap: 2px;
  height: 20px;
  padding-left: 3px;
`;
const SliderButton = styled.button<{ $w: number }>`
  width: ${(p) => p.$w}px;
  height: 17px;
  line-height: 16px;
  border-radius: 3px;
  background: #636363;
  font-size: 11px;
  color: #dcdcdc;
`;
const Track = styled.div`
  display: grid;
  grid-template-columns: 54px 1fr;
  height: 25px;
  border-top: 1px solid #151515;
`;
const TrackButton = styled.button`
  display: flex;
  align-items: center;
  justify-content: center;
  padding-right: 10px;
`;
const Ruler = styled.div`
  display: grid;
  grid-template-columns: repeat(20, 1fr);
  padding: 0 59px 0 4px;
  background: #2b2b2b;
`;
const RulerCell = styled.div<{ $now?: boolean }>`
  position: relative;
  background: repeating-linear-gradient(90deg, #757575 0 1px, transparent 1px 20%) 0 0 / 100% 12px no-repeat;
  & > span {
    position: relative;
    display: block;
    width: 24px;
    margin: 11px 0 0 -12px;
    text-align: center;
    font-size: 11px;
    line-height: 14px;
    color: ${(p) => (p.$now ? "#e6e08a" : "#c4c4c4")};
  }
  ${(p) => p.$now && css`
    &::before { content: ""; position: absolute; left: -3px; top: 0; width: 7px; height: 24px; background: #7d7420; }
  `}
`;

const Command = styled.aside`
  display: flex;
  flex-direction: column;
  border-left: 1px solid #353535;
  padding: 4px 5px 0 0;
`;
const CommandTabs = styled.div`
  display: grid;
  grid-template-columns: repeat(6, 32px);
  height: 26px;
`;
const CommandTab = styled.button<{ $on?: boolean }>`
  display: flex;
  align-items: center;
  justify-content: center;
  background: ${(p) => (p.$on ? C.panel : "#3b3b3b")};
  border-right: 1px solid #484848;
`;
const Categories = styled.div`
  display: flex;
  gap: 2px;
  padding: 4px 0 0 6px;
  height: 33px;
`;
const Category = styled.button<{ $on?: boolean }>`
  display: flex;
  align-items: center;
  justify-content: center;
  width: 22px;
  height: 22px;
  border-radius: 3px;
  background: ${(p) => (p.$on ? C.blue : "none")};
`;
const CommandBody = styled.div`
  display: flex;
  flex-direction: column;
  gap: 5px;
  padding-left: 5px;
  & > section { margin-right: 8px; }
`;
const Rollout = styled.section<{ $h: number }>`
  min-height: ${(p) => p.$h}px;
  padding: 0 10px 0 11px;
  border-radius: 3px;
  background: #515151;
`;
const RolloutHead = styled.h2`
  display: flex;
  align-items: center;
  gap: 8px;
  height: 19px;
  margin: 0 -4px;
  font-size: 11px;
  font-weight: 700;
  color: #fff;
  & > span { margin-left: auto; display: grid; grid-template-columns: repeat(3, 1px); gap: 1px; }
  & > span > b { width: 1px; height: 1px; background: #aaa; }
`;
const AutoGrid = styled.label`
  display: flex;
  align-items: center;
  gap: 4px;
  height: 20px;
  padding-left: 33px;
  font-size: 11px;
  color: #7c7c7c;
  & > input { appearance: none; width: 10px; height: 10px; margin: 0; background: #494949; }
`;
const ObjectGrid = styled.div`
  display: grid;
  grid-template-columns: 1fr 1fr;
  gap: 5px;
  padding-top: 1px;
`;
const ObjectButton = styled.button`
  height: 16px;
  line-height: 16px;
  border-radius: 2px;
  background: #666;
  box-shadow: 0 0 0 1px #484848;
  font-size: 11px;
  color: #dcdcdc;
`;
const NameRow = styled.div`
  display: flex;
  gap: 4px;
  padding: 7px 4px 0 6px;
  & > input { flex: 1; min-width: 0; height: 20px; padding: 0 4px; border: 1px solid #4b4b4b; background: #5b5b5b; }
  & > button { width: 17px; height: 20px; border: 1px solid #111; background: #ca2f86; }
`;

const Status = styled.footer`
  display: grid;
  grid-template-columns: 105px 1fr auto;
  height: 51px;
  padding-top: 2px;
`;
const Listener = styled.div`
  display: grid;
  grid-template-rows: 22px 24px;
  gap: 1px;
  padding: 1px 6px 1px 1px;
  border-right: 1px solid #1c1c1c;
  & > input {
    width: 97px;
    padding: 0 4px;
    border: 2px solid #e6e6e6;
    border-top-color: #777;
    border-radius: 0;
    background: #fff;
    color: #111;
    font-family: "Liberation Mono", "Noto Sans CJK SC", monospace;
    font-size: 11px;
  }
  & > input:first-child { background: #dcc3c3; }
`;
const Prompts = styled.div`
  display: flex;
  flex-direction: column;
  gap: 9px;
  padding: 6px 0 0 4px;
  font-size: 11px;
  line-height: 16px;
  color: #ececec;
`;
const Coords = styled.div`
  width: 892px;
  display: flex;
  flex-direction: column;
  font-size: 11px;
`;
const CoordRow = styled.div`
  display: flex;
  align-items: center;
  height: 26px;
  gap: 12px;
  & > label { display: flex; align-items: center; gap: 4px; }
  & > span { white-space: nowrap; color: #eee; }
`;
const CoordInput = styled.input`
  width: 57px;
  height: 19px;
  padding: 0 3px;
  border: 1px solid #3b3b3b;
  background: #5a5a5a;
  font-size: 11px;
  color: #8c8c8c;
`;
const TagRow = styled.div`
  display: flex;
  align-items: center;
  gap: 5px;
  height: 23px;
  padding-left: 305px;
  color: #d0d0d0;
`;

const Taskbar = styled.nav`
  display: flex;
  height: 42px;
  background: linear-gradient(90deg, #1f2926, #33341f 30%, #363423);
`;
const Start = styled.button`
  display: flex;
  align-items: center;
  justify-content: center;
  width: 48px;
`;
const TaskSearch = styled.label`
  display: flex;
  align-items: center;
  gap: 11px;
  width: 344px;
  padding-left: 12px;
  background: #f2f2f2;
  border: 1px solid #d4d4d4;
  & > input { flex: 1; border: 0; padding: 0 0 2px; background: none; font-size: 14px; color: #222; }
  & > input::placeholder { color: #333; opacity: 1; }
`;
const TaskItem = styled.button<{ $run?: boolean; $on?: boolean }>`
  display: flex;
  align-items: center;
  justify-content: center;
  width: 49px;
  background: ${(p) => (p.$on ? "#5e5f4e" : "none")};
  box-shadow: ${(p) => (p.$on ? "inset 0 -2px #76b9ed" : "none")};
  ${(p) => p.$run && css`
    background: linear-gradient(#76b9ed, #76b9ed) center bottom / 40px 2px no-repeat;
  `}
`;

/* ---------- floating windows ---------- */

const Float = styled.section<{ $x: number; $y: number; $w: number }>`
  position: absolute;
  left: ${(p) => p.$x}px;
  top: ${(p) => p.$y}px;
  width: ${(p) => p.$w}px;
  background: ${C.panel};
  box-shadow: 0 2px 6px rgba(0, 0, 0, 0.45);
`;
const FloatTitle = styled.div`
  display: flex;
  align-items: center;
  justify-content: space-between;
  height: 30px;
  padding: 0 1px 0 8px;
  background: #fff;
  color: #8d8d8d;
  line-height: 16px;
  & > span { padding-bottom: 2px; }
`;
const FloatClose = styled.button`
  width: 19px;
  height: 19px;
  margin-top: 3px;
  background: #dedede;
  color: #f4f4f4;
  font-size: 11px;
  line-height: 18px;
`;
const FloatBody = styled.div<{ $pad?: number; $end?: boolean }>`
  display: flex;
  align-items: center;
  height: 35px;
  padding: 0 ${(p) => (p.$end ? 5 : 0)}px ${(p) => (p.$end ? 5 : 1)}px ${(p) => p.$pad ?? 0}px;
  justify-content: ${(p) => (p.$end ? "flex-end" : "flex-start")};
`;
const Spin = styled.label`
  display: flex;
  align-items: center;
  width: 52px;
  height: 20px;
  margin: 0 0 0 1px;
  & > input { width: 40px; height: 20px; border: 0; padding: 0 3px 4px; background: #636363; font-size: 12px; }
  & > span { display: flex; flex-direction: column; align-items: center; justify-content: center; gap: 4px; width: 11px; height: 18px; background: #5a5a5a; }
  & > span > i:first-child { transform: rotate(180deg); }
`;
const Floating = ({ x, y, w, title, children, pad, end }: { x: number; y: number; w: number; title: string; children?: React.ReactNode; pad?: number; end?: boolean }) => (
  <Float $x={x} $y={y} $w={w}>
    <FloatTitle>
      <span>{title}</span>
      <FloatClose aria-label="关闭">x</FloatClose>
    </FloatTitle>
    <FloatBody $pad={pad} $end={end}>{children}</FloatBody>
  </Float>
);

const Dialog = styled.section`
  position: absolute;
  left: 754px;
  top: 455px;
  width: 429px;
  background: ${C.panel};
  box-shadow: 0 3px 12px rgba(0, 0, 0, 0.6);
`;
const DialogTitle = styled.div`
  display: flex;
  align-items: center;
  gap: 7px;
  height: 30px;
  padding: 0 9px 2px 8px;
  background: #fff;
  color: #111;
  font-size: 12px;
  & > button { margin-left: auto; color: #b8b8b8; }
`;
const DialogBody = styled.div`
  display: flex;
  gap: 9px;
  height: 104px;
  padding: 22px 26px 0;
  & > p { margin: 0; font-size: 11px; line-height: 26px; color: #fff; white-space: nowrap; }
`;
const Question = styled.span`
  flex: none;
  width: 30px;
  height: 30px;
  margin-top: 7px;
  border-radius: 50%;
  background: #0a6fd0;
  color: #fff;
  font-size: 24px;
  line-height: 30px;
  text-align: center;
`;
const DialogFoot = styled.div`
  display: flex;
  justify-content: flex-end;
  gap: 8px;
  height: 52px;
  padding: 12px 21px 12px 0;
  background: #f0f0f0;
`;
const DialogButton = styled.button<{ $primary?: boolean }>`
  width: 88px;
  height: 28px;
  border: 1px solid #333;
  background: ${(p) => (p.$primary ? "#3a3a3a" : "#666")};
  color: ${(p) => (p.$primary ? "#fff" : "#d4d4d4")};
  font-size: 11px;
  ${(p) => p.$primary && css`outline: 1px dotted #ddd; outline-offset: -3px;`}
`;

const Watermark = styled.aside`
  position: absolute;
  right: 0;
  bottom: 0;
  width: 466px;
  height: 233px;
  display: flex;
  align-items: center;
  gap: 4px;
  padding: 0 0 3px 42px;
  background: #fff;
`;
const Brand = styled.div`
  display: flex;
  flex-direction: column;
  padding-top: 4px;
  color: #0a0a0a;
  white-space: nowrap;
  & > strong { font-family: "Noto Sans CJK SC", sans-serif; font-size: 51px; line-height: 50px; font-weight: 900; }
  & > span { font-family: "Open Sans", sans-serif; font-size: 33px; line-height: 38px; font-style: italic; font-weight: 600; }
`;

/* ---------- viewport drawings ---------- */

const range = (a: number, b: number) => Array.from({ length: b - a + 1 }, (_, i) => a + i);

const FlatGrid = ({ cx, cy, step, color, vertical = true }: { cx: number; cy: number; step: number; color: string; vertical?: boolean }) => (
  <g shapeRendering="crispEdges" fill="none">
    {range(-Math.ceil(700 / step), Math.ceil(700 / step)).map((i) => (
      <path key={i} d={`M${cx + i * step} 3V404M2 ${cy + i * step}H695`} stroke={color} />
    ))}
    {vertical && <path d={`M${cx} 3V404`} stroke="#000" />}
    <path d={`M0 ${cy}H697`} stroke="#000" />
  </g>
);

const project = (u: number, v: number) => {
  const w = 1 - 0.166 * (u + v);
  return `${(348.5 + (166.2 * (u - v)) / w).toFixed(1)} ${(203.5 + (82.6 * (u + v)) / w).toFixed(1)}`;
};
const PerspectiveGrid = () => (
  <g fill="none">
    {range(-7, 7).map((i) => (
      <path
        key={i}
        d={`M${project(i / 7, -1)}L${project(i / 7, 1)}M${project(-1, i / 7)}L${project(1, i / 7)}`}
        stroke="#606060"
      />
    ))}
    <path d={`M${project(0, -1)}L${project(0, 1)}M${project(-1, 0)}L${project(1, 0)}`} stroke="#000" strokeWidth="1.500" />
  </g>
);

const Scene = ({ children }: { children: React.ReactNode }) => (
  <svg viewBox="0 0 697 407" preserveAspectRatio="xMidYMid slice" aria-hidden="true">{children}</svg>
);

const Labels = ({ items }: { items: string[] }) => (
  <ViewLabel>
    {items.map((t) => (
      <span key={t}>{t}</span>
    ))}
  </ViewLabel>
);

type Tool = string | [string, "fly" | "on"];
const renderTool = (t: Tool, k: number) => {
  if (t === "|") return <ToolSep key={k} />;
  const [name, flag] = Array.isArray(t) ? t : [t, ""];
  return (
    <ToolButton key={k} aria-label={name} $on={flag === "on"} $fly={flag === "fly"}>
      <Icon name={name} />
    </ToolButton>
  );
};

const MENUS = ["编辑(E)", "工具(T)", "组(G)", "视图(V)", "创建(C)", "修改器(M)", "动画(A)", "图形编辑器(D)", "渲染(R)"];
const MORE_MENUS = ["Civil View", "自定义(U)", "脚本(S)", "内容", "帮助(H)"];
const OBJECTS = ["长方体", "圆锥体", "球体", "几何球体", "圆柱体", "管状体", "圆环", "四棱锥", "茶壶", "平面", "加强型文本"];
const FILTERS = ["sphere", "shapes", "light", "camera", "helper", "warp", "group", "xref", "bone", "crate", "snow", "eye"];
const TASKS: [string, "" | "run" | "on"][] = [["cortana", ""], ["taskview", ""], ["edge", ""], ["folder", "run"], ["snip", ""], ["paint", "run"], ["firefox", ""], ["notes", "run"], ["max3", "on"], ["youku", "run"]];

const dots = range(1, 9).map((i) => <b key={i} />);

export default function App() {
  return (
    <Page lang="zh-CN">
      <Global />
      <Top>
        <AppButton aria-label="3ds Max">
          <b>3</b>
          <strong>MAX</strong>
          <Caret $c="#222" />
        </AppButton>
        <TopRows>
          <TitleBar>
            <QuickBar>
              <Combo label="工作区" value="工作区: 默认" w={130} h={20} bg="#e3e3e3" color="#111" size={12} arrow={2} />
              <QuickButton aria-label="新建"><Icon name="fNew" size={17} /></QuickButton>
              <QuickButton aria-label="打开"><Icon name="fOpen" size={17} /></QuickButton>
              <QuickButton aria-label="保存"><Icon name="fSave" size={17} /></QuickButton>
              <QuickButton aria-label="撤消"><Icon name="qUndo" size={17} /><Caret $c="#333" $s={2} /></QuickButton>
              <QuickButton aria-label="重做"><Icon name="qRedo" size={17} /><Caret $c="#333" $s={2} /></QuickButton>
              <QuickButton aria-label="项目"><Icon name="project" size={17} /><Caret $c="#333" /></QuickButton>
            </QuickBar>
            <TitleText>
              <span>Autodesk 3ds Max 2017</span>
              <span>无标题</span>
            </TitleText>
            <InfoCenter>
              <Opener aria-label="展开"><Caret $c="#222" /></Opener>
              <InfoSearch aria-label="搜索" placeholder="键入关键字或短语" />
              <QuickButton aria-label="查找"><Icon name="binoc" size={17} /></QuickButton>
              <QuickButton aria-label="通讯"><Icon name="dish" size={17} /></QuickButton>
              <QuickButton aria-label="收藏"><Icon name="star" size={17} /></QuickButton>
              <SignIn><Icon name="user" size={17} />登录<Caret $c="#333" $s={2} /></SignIn>
              <QuickButton aria-label="应用商店"><Icon name="exch" size={17} /></QuickButton>
              <Rule />
              <QuickButton aria-label="帮助"><Icon name="help" size={17} /><Caret $c="#333" $s={2} /></QuickButton>
            </InfoCenter>
            <WinControls>
              <WinButton aria-label="最小化"><Icon name="min" size={11} /></WinButton>
              <WinButton aria-label="还原"><Icon name="max" size={11} /></WinButton>
              <WinButton aria-label="关闭"><Icon name="close" size={10} /></WinButton>
            </WinControls>
          </TitleBar>
          <MenuBar>
            <MenuGroup $gap={25}>
              {MENUS.map((m) => (
                <MenuItem key={m}>{m}</MenuItem>
              ))}
            </MenuGroup>
            <MenuGroup $gap={20}>
              {MORE_MENUS.map((m) => (
                <MenuItem key={m}>{m}</MenuItem>
              ))}
            </MenuGroup>
          </MenuBar>
        </TopRows>
      </Top>

      <Toolbar>
        <Grip />
        {(["undo", "redo", "|", "link", "unlink", "bind", "|"] as Tool[]).map(renderTool)}
        <Combo label="选择过滤器" value="全部" w={70} h={20} />
        {(["select", "byName", ["region", "fly"], "crossing", "|", "move", "rotate", ["scale", "fly"], ["place", "fly"]] as Tool[]).map(renderTool)}
        <Combo label="参考坐标系" value="视图" w={70} h={20} />
        {([["pivot", "fly"], "|", "manip", "keyb", "|", ["snap3", "fly"], "snapA", "snapP", "snapS", "|", "sets"] as Tool[]).map(renderTool)}
        <Combo label="创建选择集" value="创建选择集" w={119} h={20} />
        {(["|", "mirror", ["align", "fly"], "|", "scene", "layers", "|", ["ribbon", "on"], "curve", "dope", "|", ["schema", "fly"], "|", "rSetup", "rFrame", ["rProd", "fly"], "rCloud", "gallery"] as Tool[]).map(renderTool)}
        <ToolbarEnd />
      </Toolbar>

      <RibbonTabs>
        <Grip />
        <RibbonTab $on $w={58}>建模</RibbonTab>
        <RibbonTab $w={102}>自由形式</RibbonTab>
        <RibbonTab $w={74}>选择</RibbonTab>
        <RibbonTab $w={102}>对象绘制</RibbonTab>
        <RibbonTab $w={76}>填充</RibbonTab>
        <RibbonPill aria-label="显示选项"><span><Caret $c="#222" $s={2} /></span><Caret $s={2} /></RibbonPill>
      </RibbonTabs>
      <RibbonBody>
        <Grip />
        <RibbonPanel>多边形建模</RibbonPanel>
      </RibbonBody>

      <Main>
        <Dock>
          <DockHead />
          <DockArrow aria-label="播放"><Caret $s={4} /></DockArrow>
          <DockLayout aria-label="视口布局"><span /><span /><span /><span /></DockLayout>
        </Dock>

        <Explorer>
          <ExplorerHead>
            <ExplorerMenu>
              {["选择", "显示", "编辑", "自定义"].map((m) => (
                <MenuItem key={m}>{m}</MenuItem>
              ))}
            </ExplorerMenu>
            <ExplorerRow>
              <LineInput $w={150} aria-label="查找" />
              <SquareButton aria-label="清除"><Icon name="clear" size={10} /></SquareButton>
              <SquareButton $on aria-label="过滤"><Icon name="filterB" size={20} /></SquareButton>
              <Rule />
              <SquareButton aria-label="锁定"><Icon name="lock" size={14} /></SquareButton>
              <More>»</More>
            </ExplorerRow>
          </ExplorerHead>
          <ExplorerBody>
            <FilterStrip>
              {FILTERS.map((f) => (
                <FilterButton key={f} $on aria-label={f}><Icon name={f} size={16} /></FilterButton>
              ))}
              <hr />
              {["page", "blank", "pageO"].map((f) => (
                <FilterButton key={f} aria-label={f}><Icon name={f} size={15} /></FilterButton>
              ))}
              <hr />
              {["funnelX", "funnel", "cage"].map((f) => (
                <FilterButton key={f} aria-label={f}><Icon name={f} size={15} /></FilterButton>
              ))}
            </FilterStrip>
            <ObjectList><div>名称(按升序排序)</div></ObjectList>
          </ExplorerBody>
          <ExplorerFoot>
            <LineInput $w={146} aria-label="工作区" defaultValue="工作区: 默认" />
            <Caret $c="#111" />
            <Rule />
            <Icon name="stackS" size={16} />
            <SquareButton $on aria-label="层次"><Icon name="hier" size={18} /></SquareButton>
            <Rule />
            <More>»</More>
          </ExplorerFoot>
        </Explorer>

        <Stage>
          <Views>
            <Viewport $active>
              <Scene>
                <FlatGrid cx={30.5} cy={111} step={69.200} color="#505050" vertical={false} />
                <path d="M27 378V350" stroke="#128a12" strokeWidth="1.500" />
                <text x="27" y="358" fontSize="11" fill="#128a12">y</text>
                <circle cx="640" cy="56" r="29.500" fill="none" stroke="#7d858a" strokeWidth="6" />
                <path d="M625 41h31v31h-31z" fill="#8f8f8f" />
                <g fontSize="11" fill="#aaaaaa" textAnchor="middle">
                  <text x="640" y="29">北</text>
                  <text x="640" y="95">南</text>
                  <text x="608" y="61">西</text>
                  <text x="673" y="61">东</text>
                  <text x="640" y="62" fontSize="14" fill="#666">上</text>
                </g>
              </Scene>
              <Labels items={["[+]", "[顶 ]", "[标准 ]", "[线框 ]"]} />
            </Viewport>
            <Viewport>
              <Scene>
                <FlatGrid cx={348} cy={203} step={17.270} color="#606060" />
                <ellipse cx="641" cy="73" rx="34" ry="3" fill="none" stroke="#a4a4a4" strokeWidth="1.500" />
                <path d="M626 41h31v31h-31z" fill="#858585" />
                <text x="641" y="63" fontSize="15" textAnchor="middle" fill="#555">前</text>
              </Scene>
              <Labels items={["[+]", "[前 ]", "[标准 ]", "[线框 ]"]} />
            </Viewport>
            <Viewport>
              <Scene>
                <FlatGrid cx={348} cy={203} step={17.250} color="#606060" />
                <path d="M27 380V357" stroke="#1212a8" strokeWidth="1.500" />
                <path d="M5 380H27" stroke="#128a12" strokeWidth="1.500" />
                <g fontSize="11">
                  <text x="27" y="358" fill="#1c1cc0">z</text>
                  <text x="2" y="383" fill="#128a12">y</text>
                  <text x="27" y="384" fill="#901818">x</text>
                </g>
              </Scene>
            </Viewport>
            <Viewport $shade>
              <Scene>
                <PerspectiveGrid />
                <ellipse cx="640" cy="73" rx="32" ry="17" fill="none" stroke="#858c91" strokeWidth="6" />
                <path d="M640 36l20 8v26l-20 9-20-9V44z" fill="#8c8c8c" />
                <path d="M620 44l20 8 20-8M640 52v27" fill="none" stroke="#9e9e9e" />
                <path d="M626 56v12M631 58v12M634 60v9M646 60v10M650 57v12M654 56v10M634 43l10 3M638 40l6 2" fill="none" stroke="#6a6a6a" />
                <g fontSize="11">
                  <path d="M26 381V360" stroke="#1c1cc0" strokeWidth="1.500" />
                  <path d="M26 381L44 372" stroke="#b01818" strokeWidth="1.500" />
                  <path d="M26 381L14 373" stroke="#128a12" strokeWidth="1.500" />
                  <text x="26" y="361" fill="#1c1cc0">z</text>
                  <text x="45" y="374" fill="#b01818">x</text>
                  <text x="9" y="375" fill="#128a12">y</text>
                </g>
              </Scene>
              <Labels items={["[+]", "[透视 ]", "[标准 ]", "[默认明暗处理 ]"]} />
            </Viewport>
          </Views>
          <SliderRow>
            <SliderButton $w={14} aria-label="上一帧">&lt;</SliderButton>
            <SliderButton $w={123}>0 / 100</SliderButton>
            <SliderButton $w={14} aria-label="下一帧">&gt;</SliderButton>
          </SliderRow>
          <Track>
            <TrackButton aria-label="打开迷你曲线编辑器"><Icon name="mini" size={14} /></TrackButton>
            <Ruler>
              {range(0, 19).map((i) => (
                <RulerCell key={i} $now={i === 0}>{i <= 16 && <span>{i * 5}</span>}</RulerCell>
              ))}
            </Ruler>
          </Track>
        </Stage>

        <Command>
          <CommandTabs>
            {["plus", "modify", "hierT", "motion", "display", "wrench"].map((n, i) => (
              <CommandTab key={n} $on={i === 0} aria-label={n}><Icon name={n} size={16} /></CommandTab>
            ))}
          </CommandTabs>
          <Categories>
            {["sphere", "shapes", "light", "camera", "helper", "warp", "systems"].map((n, i) => (
              <Category key={n} $on={i === 0} aria-label={n}><Icon name={n} size={i === 0 ? 18 : 15} /></Category>
            ))}
          </Categories>
          <CommandBody>
            <Combo label="类别" value="标准基本体" w={190} h={20} />
            <Rollout $h={166}>
              <RolloutHead><Caret />对象类型<span>{dots}</span></RolloutHead>
              <AutoGrid><input type="checkbox" disabled />自动栅格</AutoGrid>
              <ObjectGrid>
                {OBJECTS.map((o) => (
                  <ObjectButton key={o}>{o}</ObjectButton>
                ))}
              </ObjectGrid>
            </Rollout>
            <Rollout $h={56}>
              <RolloutHead><Caret />名称和颜色<span>{dots}</span></RolloutHead>
              <NameRow>
                <input aria-label="名称" />
                <button aria-label="颜色" />
              </NameRow>
            </Rollout>
          </CommandBody>
        </Command>
      </Main>

      <Status>
        <Listener>
          <input aria-label="宏录制器" />
          <input aria-label="MAXScript 侦听器" defaultValue="欢迎使用 MAXScript" />
        </Listener>
        <Prompts>
          <span>未选定任何对象</span>
          <span>单击或单击并拖动以选择对象</span>
        </Prompts>
        <Coords>
          <CoordRow>
            <Icon name="isolate" size={15} />
            <Icon name="lockD" size={15} />
            <Icon name="absolute" size={15} />
            {[["X", "146.637"], ["Y", "15.199"], ["Z", "0.0"]].map(([k, v]) => (
              <label key={k}>{k}:<CoordInput defaultValue={v} disabled /></label>
            ))}
            <span>栅格 = 10.0</span>
          </CoordRow>
          <TagRow><Category $on aria-label="时间标记"><Icon name="cube" size={14} /></Category>添加时间标记</TagRow>
        </Coords>
      </Status>

      <Taskbar>
        <Start aria-label="开始"><Icon name="win" size={17} /></Start>
        <TaskSearch>
          <Icon name="search" size={16} />
          <input aria-label="搜索" placeholder="在这里输入你要搜索的内容" />
        </TaskSearch>
        {TASKS.map(([n, s]) => (
          <TaskItem key={n} $run={s === "run"} $on={s === "on"} aria-label={n}>
            <Icon name={n} size={n === "cortana" || n === "taskview" ? 17 : 24} />
          </TaskItem>
        ))}
      </Taskbar>

      <Floating x={228} y={276} w={367} title="层" pad={4}>
        <ToolButton $w={24} aria-label="层"><Icon name="layers" size={20} /></ToolButton>
        <Combo label="层" value="0 (默认)" w={206} h={20} />
        <ToolSep $w={6} />
        <ToolButton aria-label="新建层"><Icon name="aGear" size={20} /></ToolButton>
        <ToolButton aria-label="添加到层"><Icon name="a1" size={20} /></ToolButton>
        <ToolButton aria-label="选择层"><Icon name="byName" size={20} /></ToolButton>
        <ToolButton aria-label="设置层"><Icon name="a2" size={20} /></ToolButton>
      </Floating>
      <Floating x={420} y={169} w={207} title="" end>
        <ToolButton aria-label="材质"><Icon name="teaSphere" size={20} /></ToolButton>
        <ToolButton aria-label="贴图"><Icon name="teaSphere" size={20} /></ToolButton>
        <ToolButton $w={24} aria-label="环境"><Icon name="teaSphere" size={22} /></ToolButton>
      </Floating>
      <Floating x={372} y={156} w={226} title="渲染快捷方式" end>
        <ToolButton aria-label="渲染"><Icon name="rotate" size={20} /></ToolButton>
        <ToolSep />
        <Combo label="预设" value="" w={118} h={20} />
      </Floating>
      <Floating x={157} y={185} w={294} title="捕捉">
        <ToolButton $on aria-label="捕捉到栅格点"><Icon name="snapGrid" size={24} /></ToolButton>
        <ToolButton aria-label="捕捉到轴心"><Icon name="snapAxis" size={24} /></ToolButton>
      </Floating>
      <Floating x={125} y={260} w={512} title="容器">
        {["cOpen", "c1", "c2", "c3", "c4", "c5", "c6", "c7", "c8", "c9", "c10", "c11", "c12", "c13", "c14", "lockO"].map(renderTool)}
      </Floating>
      <Floating x={208} y={201} w={272} title="MassFX Toolbar" pad={2}>
        {([["world", "fly"], "|", ["ball", "fly"], ["shirt", "fly"], ["fluid", "fly"], ["ragdoll", "fly"], "|", "mfxBack", ["mfxPlay", "fly"], "mfxStep"] as Tool[]).map(renderTool)}
      </Floating>
      <Floating x={74} y={502} w={580} title="动画层">
        <ToolButton aria-label="动画层"><Icon name="a1" /></ToolButton>
        <ToolButton aria-label="选择活动层对象"><Icon name="a2" /></ToolButton>
        <Combo label="动画层" value="" w={207} h={23} />
        <Spin>
          <input aria-label="权重" defaultValue="0.0" />
          <span><Caret $s={2} /><Caret $s={2} /></span>
        </Spin>
        {["aGear", "a3", "a4", "a5", "a6", "a7", "a8", "a9"].map(renderTool)}
      </Floating>

      <Dialog role="dialog" aria-label="3ds Max">
        <DialogTitle>
          <Icon name="three" size={15} />
          <span>3ds Max</span>
          <WinButton aria-label="关闭"><Icon name="close" size={11} /></WinButton>
        </DialogTitle>
        <DialogBody>
          <Question>?</Question>
          <p>
            如果继续，您将丢失自启动本会话以来对 UI 布局所作的全部更改。
            <br />
            是否继续?
          </p>
        </DialogBody>
        <DialogFoot>
          <DialogButton $primary>是(<u>Y</u>)</DialogButton>
          <DialogButton>否(<u>N</u>)</DialogButton>
        </DialogFoot>
      </Dialog>

      <Watermark>
        <svg width="126" height="102" viewBox="0 0 126 102" aria-hidden="true">
          <path d="M65 20l20 11v60l-20 4zM92 40l20 8-22 28z" fill="#d9dadd" />
          <path d="M38 27l21-11v68H38zM72 47l18-8v38l-18 6zM8 61l19-9v28c-8-3-16-10-19-19z" fill="#163f96" />
          <path d="M42 30l14-8v60H42z" fill="#3a62ae" opacity=".5" />
          <path d="M8 44C20 20 50 1 82 1c27 0 44 16 39 42l-4 2c2-21-14-35-38-35-29 0-50 11-71 34z" fill="#93c01f" />
          <path d="M5 53c-4 22 10 34 40 34 36 0 65-19 79-45-9 33-45 57-83 58C9 100-7 80 5 53z" fill="#173f98" />
        </svg>
        <Brand>
          <strong>土木工程网</strong>
          <span>www.civilcn.com</span>
        </Brand>
      </Watermark>
    </Page>
  );
}
